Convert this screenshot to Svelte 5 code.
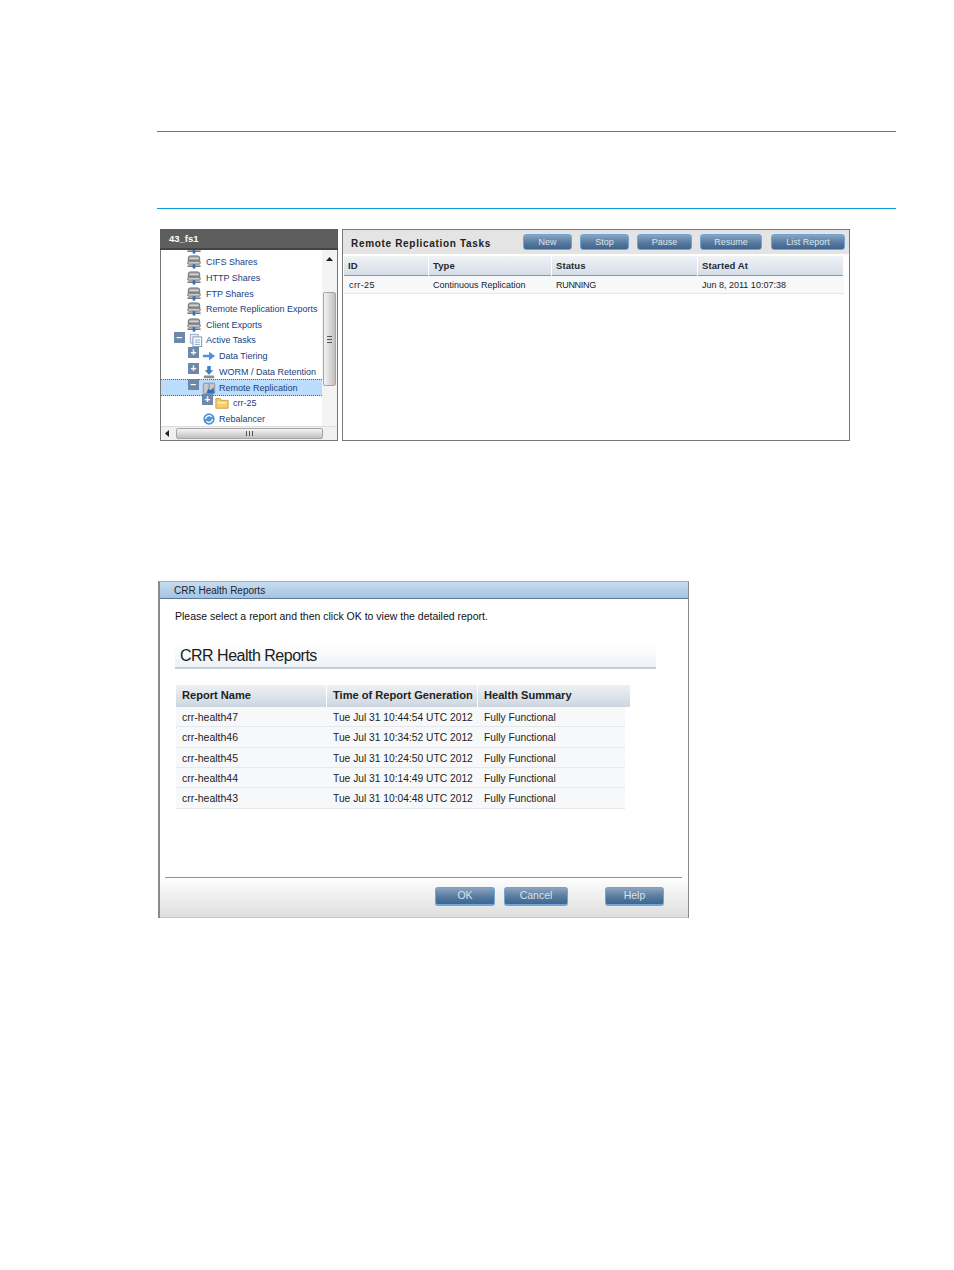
<script>
  const tree = [
    { label: 'CIFS Shares', icon: 'share', depth: 1 },
    { label: 'HTTP Shares', icon: 'share', depth: 1 },
    { label: 'FTP Shares', icon: 'share', depth: 1 },
    { label: 'Remote Replication Exports', icon: 'share', depth: 1 },
    { label: 'Client Exports', icon: 'share', depth: 1 },
    { label: 'Active Tasks', icon: 'tasks', depth: 0, toggle: '−' },
    { label: 'Data Tiering', icon: 'arrow', depth: 2, toggle: '+' },
    { label: 'WORM / Data Retention', icon: 'down', depth: 2, toggle: '+' },
    { label: 'Remote Replication', icon: 'repl', depth: 2, toggle: '−', selected: true },
    { label: 'crr-25', icon: 'folder', depth: 3, toggle: '+' },
    { label: 'Rebalancer', icon: 'rebal', depth: 2 }
  ];
  const actions = ['New', 'Stop', 'Pause', 'Resume', 'List Report'];
  const reports = [
    ['crr-health47', 'Tue Jul 31 10:44:54 UTC 2012'],
    ['crr-health46', 'Tue Jul 31 10:34:52 UTC 2012'],
    ['crr-health45', 'Tue Jul 31 10:24:50 UTC 2012'],
    ['crr-health44', 'Tue Jul 31 10:14:49 UTC 2012'],
    ['crr-health43', 'Tue Jul 31 10:04:48 UTC 2012']
  ];
</script>

{#snippet shareIcon()}
  <path d="M1.500 7V3.500Q1.500 1 4 1h8q2.500 0 2.500 2.500V7z" fill="#9ea2a2" stroke="#6a6a6a"/>
  <rect x="3" y="3" width="10" height="1.500" fill="#d5d8d8"/>
  <rect x="1" y="7" width="14" height="3.500" rx="1" fill="#c9cccc" stroke="#666"/>
  <rect x="0.500" y="12" width="15" height="1.500" fill="#5a5a5a"/>
  <rect x="6.500" y="10.500" width="3" height="5" fill="#2f6fc0"/>
{/snippet}

<div class="page">
  <div class="rules"></div>

  <section class="shot">
    <div class="tree">
      <div class="tree-title">43_fs1</div>
      <div class="tree-body">
        <div class="tree-list">
          <div class="node d1 clipped">
            <svg class="ico" viewBox="0 0 16 16" width="16" height="16">{@render shareIcon()}</svg>
          </div>
          {#each tree as n}
            <div class="node d{n.depth}" class:selected={n.selected}>
              {#if n.toggle}<span class="toggle">{n.toggle}</span>{/if}
              <svg class="ico" viewBox="0 0 16 16" width="16" height="16">
                {#if n.icon === 'share'}
                  {@render shareIcon()}
                {:else if n.icon === 'tasks'}
                  <rect x="1.500" y="1.500" width="9" height="10" fill="#e8eff6" stroke="#8ba4c0"/>
                  <rect x="4.500" y="4.500" width="10" height="11" fill="#fff" stroke="#6f8fb5"/>
                  <path d="M6.500 8h6M6.500 10.500h6M6.500 13h6" stroke="#7d9cc0"/>
                {:else if n.icon === 'arrow'}
                  <path d="M1 6.500h7V3l7 5-7 5V9.500H1z" fill="#4a94dd"/>
                {:else if n.icon === 'down'}
                  <path d="M6 1h4v5h3l-5 5-5-5h3z" fill="#3d7dc4"/>
                  <rect x="2" y="12" width="12" height="3" rx="1" fill="#8a8f8c"/>
                {:else if n.icon === 'repl'}
                  <rect x="1.500" y="2.500" width="13" height="12" rx="1" fill="#c5c8cb" stroke="#858a8f"/>
                  <path d="M8 3v11" stroke="#7f8589"/>
                  <path d="M5 14l2-5 3 1.500 3-3.500 1 7z" fill="#2e6db8"/>
                {:else if n.icon === 'folder'}
                  <path d="M1 3h5l1 2h8v9H1z" fill="#f3cf68" stroke="#cf9f2d"/>
                  <rect x="3" y="7" width="10" height="1.500" fill="#fff3c4"/>
                {:else}
                  <circle cx="8" cy="8" r="6.500" fill="#4f93d8"/>
                  <path d="M4 8a4 4 0 0 1 7-2.500M12 8a4 4 0 0 1-7 2.500" fill="none" stroke="#fff" stroke-width="1.500"/>
                {/if}
              </svg>
              <span>{n.label}</span>
            </div>
          {/each}
        </div>
        <div class="vscroll">
          <svg class="arrow-up" viewBox="0 0 7 4" width="7" height="4"><path d="M0 4l3.500-4 3.500 4z" fill="#222"/></svg>
          <div class="vthumb"><span class="grip-v"></span></div>
        </div>
      </div>
      <div class="hscroll">
        <svg viewBox="0 0 4 7" width="4" height="7"><path d="M4 0L0 3.500 4 7z" fill="#222"/></svg>
        <div class="hthumb"><span class="grip-h"></span></div>
      </div>
    </div>

    <div class="tasks">
      <div class="tasks-head">
        <h2>Remote Replication Tasks</h2>
        <div class="actions">
          {#each actions as a}<button class="btn small">{a}</button>{/each}
        </div>
      </div>
      <div class="task-table">
        <div class="task-row heads"><b>ID</b><b>Type</b><b>Status</b><b>Started At</b></div>
        <div class="task-row cells"><span>crr-25</span><span>Continuous Replication</span><span>RUNNING</span><span>Jun 8, 2011 10:07:38</span></div>
      </div>
    </div>
  </section>

  <section class="dialog">
    <div class="dialog-title">CRR Health Reports</div>
    <div class="dialog-body">
      <p>Please select a report and then click OK to view the detailed report.</p>
      <h1>CRR Health Reports</h1>
      <div class="rep-head"><b>Report Name</b><b>Time of Report Generation</b><b>Health Summary</b></div>
      <div class="rep-rows">
        {#each reports as r}
          <div class="rep-row"><span class="rep-name">{r[0]}</span><span>{r[1]}</span><span>Fully Functional</span></div>
        {/each}
      </div>
    </div>
    <div class="dialog-foot">
      <div class="foot-rule"></div>
      <div class="foot-btns">
        <button class="btn big ok">OK</button>
        <button class="btn big cancel">Cancel</button>
        <button class="btn big help">Help</button>
      </div>
    </div>
  </section>
</div>

<style>
  :global(body) { margin: 0; background: #fff; }
  .page { width: 954px; height: 1270px; box-sizing: border-box; padding: 131px 58px 0 157px; font-family: "Liberation Sans", Arial, sans-serif; overflow: hidden; }
  .rules { height: 78px; box-sizing: border-box; border-top: 1px solid #1c8fc4; border-bottom: 1px solid #0f9ed8; }

  .shot { display: flex; gap: 4px; margin: 20px 0 0 3px; height: 212px; width: 690px; }
  .tree { width: 178px; box-sizing: border-box; border: 1px solid #777; display: flex; flex-direction: column; }
  .tree-title { height: 19px; margin: -1px -1px 0; background: #5e5e5e; border-bottom: 2px solid #444; color: #fff; font-size: 9.500px; font-weight: bold; line-height: 20px; padding-left: 9px; }
  .tree-body { flex: 1; display: flex; min-height: 0; }
  .tree-list { flex: 1; overflow: hidden; }
  .node { height: 15.600px; display: flex; align-items: center; gap: 5px; color: #17407f; font-size: 9px; position: relative; white-space: nowrap; }
  .clipped { margin-top: -11px; }
  .node .ico { flex: none; width: 14px; height: 14px; }
  .d0 { padding-left: 28px; gap: 3px; }
  .d1 { padding-left: 26px; }
  .d2 { padding-left: 41px; gap: 3px; }
  .d3 { padding-left: 54px; gap: 4px; }
  .selected { background: #bcdcfb; box-sizing: border-box; height: 17px; margin-bottom: -1px; border-top: 1px dotted #3c6c9c; border-bottom: 1px dotted #3c6c9c; }
  .toggle { position: absolute; top: -1px; width: 11px; height: 11px; background: #6d88a8; color: #fff; font-size: 10px; font-weight: bold; line-height: 11px; text-align: center; }
  .d0 .toggle { left: 13px; }
  .d2 .toggle { left: 27px; }
  .d3 .toggle { left: 41px; }
  .vscroll { width: 15px; flex: none; position: relative; background: #f3f3f3; }
  .arrow-up { position: absolute; left: 4px; top: 7px; }
  .vthumb { position: absolute; left: 1px; top: 42px; width: 11px; height: 92px; border: 1px solid #a5a5a5; border-radius: 2px; background: linear-gradient(90deg, #f4f4f4, #c0c0c0); display: flex; align-items: center; justify-content: center; }
  .grip-v { width: 5px; height: 5px; border-top: 1px solid #555; border-bottom: 1px solid #555; background: linear-gradient(#555, #555) center/5px 1px no-repeat; }
  .hscroll { height: 13px; flex: none; background: #f0f0f0; position: relative; border-top: 1px solid #ddd; display: flex; align-items: center; padding-left: 4px; }
  .hthumb { position: absolute; left: 15px; top: 1px; width: 145px; height: 9px; border: 1px solid #a5a5a5; border-radius: 2px; background: linear-gradient(#f4f4f4, #c0c0c0); display: flex; align-items: center; justify-content: center; }
  .grip-h { width: 5px; height: 5px; border-left: 1px solid #555; border-right: 1px solid #555; background: linear-gradient(#555, #555) center/1px 5px no-repeat; }

  .tasks { width: 508px; box-sizing: border-box; border: 1px solid #777; }
  .tasks-head { height: 24px; background: #e4e4e4; display: flex; align-items: center; justify-content: space-between; padding: 0 4px 0 8px; }
  h2 { margin: 2px 0 0; font-size: 10px; font-weight: bold; color: #222; letter-spacing: 0.680px; }
  .actions { display: flex; gap: 8px; }
  .btn { display: block; margin: 0; padding: 0; box-sizing: border-box; border: 1px solid #6fa6d8; border-radius: 3px; background: linear-gradient(#8ba3bf, #577a9f 55%, #3f668f); color: #d9e3ed; font-family: inherit; }
  .btn.small { height: 16px; font-size: 9px; line-height: 14px; width: 49px; }
  .btn.small:nth-child(3) { width: 55px; }
  .btn.small:nth-child(4) { width: 62px; margin-right: 1px; }
  .btn.small:nth-child(5) { width: 74px; }
  .task-row { display: grid; grid-template-columns: 85px 123px 146px 146px; margin-left: 1px; box-sizing: border-box; }
  .task-row > * { padding-left: 4px; white-space: nowrap; }
  .heads { height: 20px; width: 499px; line-height: 20px; background: linear-gradient(#f0f3f6, #d5dde6); border-bottom: 1px solid #7d9bb8; margin-top: 2px; }
  .heads b { font-size: 9.500px; letter-spacing: 0.100px; color: #1f2a36; border-right: 1px solid #fff; }
  .cells { height: 18px; width: 500px; line-height: 18px; background: #f6f8fa; border-bottom: 1px solid #e4e7ea; color: #222; font-size: 9px; }
  .cells span:first-child { letter-spacing: 0.400px; padding-left: 5px; }
  .cells span:nth-child(3) { letter-spacing: -0.300px; }

  .dialog { margin: 140px 0 0 1px; width: 531px; height: 337px; box-sizing: border-box; border-left: 2px solid #8a8a8a; border-right: 1px solid #8a8a8a; border-top: 1px solid #a9a9a9; display: flex; flex-direction: column; }
  .dialog-title { height: 17px; flex: none; box-sizing: border-box; background: linear-gradient(#c9ddf0, #a4c3e1); border-bottom: 1px solid #5b7a99; font-size: 10px; line-height: 17px; padding-left: 14px; color: #1b2530; }
  .dialog-body { flex: 1; padding: 11px 0 0 15px; position: relative; }
  p { margin: 0; font-size: 10.500px; line-height: 12px; color: #111; }
  h1 { margin: 22px 0 0; width: 481px; height: 25px; box-sizing: border-box; padding-left: 5px; font-size: 16px; font-weight: normal; line-height: 24px; letter-spacing: -0.500px; color: #1c1c1c; background: linear-gradient(#fff, #eef2f6); border-bottom: 2px solid #c3ced9; }
  .rep-head, .rep-row { display: grid; grid-template-columns: 151px 151px 150px; }
  .rep-head { margin: 16px 0 0 1px; height: 22px; width: 454px; background: linear-gradient(#eef1f4, #cdd6e0); }
  .rep-head b { font-size: 11.100px; line-height: 20px; padding-left: 6px; color: #222; border-right: 1px solid #fff; white-space: nowrap; }
  .rep-head b:last-child { border-right: 0; }
  .rep-rows { margin-left: 1px; width: 449px; }
  .rep-row { height: 20.350px; box-sizing: border-box; background: #f6f8fa; border-bottom: 1px solid #e6e9ec; }
  .rep-row span { font-size: 10.250px; line-height: 21px; padding-left: 6px; color: #1c1c1c; white-space: nowrap; }
  .rep-row .rep-name { font-size: 10.500px; }
  .dialog-foot { height: 41px; flex: none; background: linear-gradient(#fff, #dedede); border-bottom: 1px solid #c8c8c8; box-sizing: border-box; }
  .foot-rule { height: 1px; margin: 0 6px 0 5px; background: #8497a8; }
  .foot-btns { display: flex; padding-top: 9px; margin-left: 5px; }
  .btn.big { height: 19px; font-size: 10.500px; line-height: 15px; padding-bottom: 2px; border-bottom-width: 2px; }
  .ok { width: 60px; margin-left: 270px; }
  .cancel { width: 64px; margin-left: 9px; }
  .help { width: 59px; margin-left: 37px; }
</style>
